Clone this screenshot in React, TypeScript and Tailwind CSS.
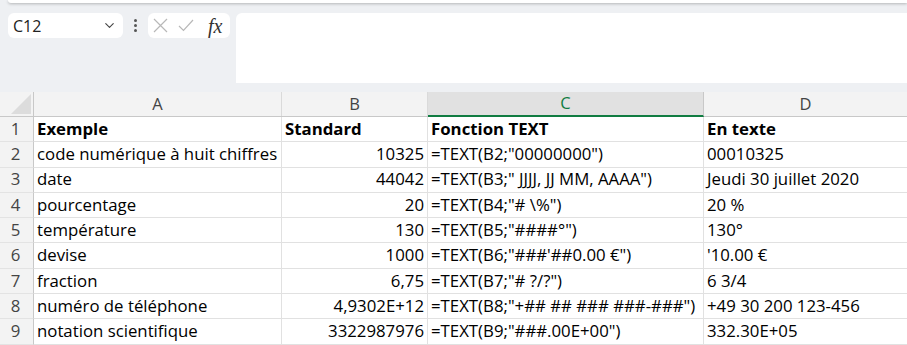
import { ChevronDown } from 'lucide-react';

const rows = [
  ['Exemple', 'Standard', 'Fonction TEXT', 'En texte'],
  ['code numérique à huit chiffres', '10325', '=TEXT(B2;"00000000")', '00010325'],
  ['date', '44042', '=TEXT(B3;" JJJJ, JJ MM, AAAA")', 'Jeudi 30 juillet 2020'],
  ['pourcentage', '20', '=TEXT(B4;"# \\%")', '20 %'],
  ['température', '130', '=TEXT(B5;"####°")', '130°'],
  ['devise', '1000', '=TEXT(B6;"###\'##0.00 €")', '\'10.00 €'],
  ['fraction', '6,75', '=TEXT(B7;"# ?/?")', '6 3/4'],
  ['numéro de téléphone', '4,9302E+12', '=TEXT(B8;"+## ## ### ###-###")', '+49 30 200 123-456'],
  ['notation scientifique', '3322987976', '=TEXT(B9;"###.00E+00")', '332.30E+05'],
];

export default function App() {
  return (
    <div className="w-[907px] h-[345px] overflow-hidden bg-[#eef0f3] font-['Open_Sans',sans-serif] text-black">
      {/* Ribbon edge */}
      <div className="ml-[8px] h-[3px] rounded-bl-md bg-white shadow-[0_1px_3px_rgba(0,0,0,0.25)]" />

      {/* Formula bar */}
      <div className="flex items-start mt-[10px] h-[70px]">
        <div className="ml-[8px] w-[115px] h-[25px] bg-white rounded-md flex items-center pl-[5px] pr-[6px]">
          <span className="text-[16px] text-[#222] leading-none">C12</span>
          <ChevronDown className="ml-auto w-[15px] h-[15px] text-[#444]" strokeWidth={1.8} />
        </div>
        <div className="w-[25px] h-[25px] flex flex-col items-center justify-center gap-[2px]">
          <span className="w-[3px] h-[3px] rounded-full bg-[#555]" />
          <span className="w-[3px] h-[3px] rounded-full bg-[#555]" />
          <span className="w-[3px] h-[3px] rounded-full bg-[#555]" />
        </div>
        <div className="w-[82px] h-[25px] bg-white rounded-md flex items-center pl-[5px]">
          <svg width="15" height="15" viewBox="0 0 15 15" className="shrink-0">
            <path d="M1 1 L14 14 M14 1 L1 14" stroke="#b8b8b8" strokeWidth="1.2" fill="none" />
          </svg>
          <svg width="16" height="13" viewBox="0 0 16 13" className="ml-[10px] shrink-0">
            <path d="M1 7 L5.5 11.5 L15 1" stroke="#b8b8b8" strokeWidth="1.2" fill="none" />
          </svg>
          <span className="ml-[14px] font-['Liberation_Serif',serif] italic text-[20px] text-[#333] leading-none">fx</span>
        </div>
        <div className="ml-[6px] flex-1 h-[70px] bg-white rounded-tl-md" />
      </div>

      {/* Grid */}
      <div className="mt-[9px] bg-white">
        <div className="flex h-[25px] bg-[#f3f3f3] border-b border-[#c8c8c8] text-[16.5px] text-[#444]">
          <div className="relative w-[34px] shrink-0 border-r border-[#c8c8c8]">
            <svg className="absolute right-[2px] bottom-[2px]" width="20" height="20" viewBox="0 0 20 20">
              <polygon points="20,0 20,20 0,20" fill="#dcdcdc" />
            </svg>
          </div>
          <div className="w-[248px] shrink-0 flex items-center justify-center border-r border-[#dadada]">A</div>
          <div className="w-[146px] shrink-0 flex items-center justify-center border-r border-[#dadada]">B</div>
          <div className="w-[276px] shrink-0 flex items-center justify-center bg-[#e1e1e1] text-[#107c41] border-b-2 border-[#107c41] border-r border-r-[#c8c8c8] -mb-px">C</div>
          <div className="flex-1 flex items-center justify-center">D</div>
        </div>
        {rows.map((r, i) => (
          <div key={i} className="flex h-[25.3px] text-[16.8px] leading-none">
            <div className="w-[34px] shrink-0 bg-[#f3f3f3] border-r border-[#c8c8c8] border-b border-b-[#e3e3e3] flex items-center justify-center pr-[2px] text-[#444]">
              {i + 1}
            </div>
            <div className={`w-[248px] shrink-0 border-r border-b border-[#e1e1e1] flex items-center px-[3px] whitespace-nowrap ${i === 0 ? 'font-bold' : ''}`}>
              {r[0]}
            </div>
            <div className={`w-[146px] shrink-0 border-r border-b border-[#e1e1e1] flex items-center px-[3px] whitespace-nowrap ${i === 0 ? 'font-bold' : 'justify-end'}`}>
              {r[1]}
            </div>
            <div className={`w-[276px] shrink-0 border-r border-b border-[#e1e1e1] flex items-center px-[3px] whitespace-nowrap ${i === 0 ? 'font-bold' : ''}`}>
              {r[2]}
            </div>
            <div className={`flex-1 border-b border-[#e1e1e1] flex items-center px-[3px] whitespace-nowrap ${i === 0 ? 'font-bold' : ''}`}>
              {r[3]}
            </div>
          </div>
        ))}
      </div>
    </div>
  );
}
